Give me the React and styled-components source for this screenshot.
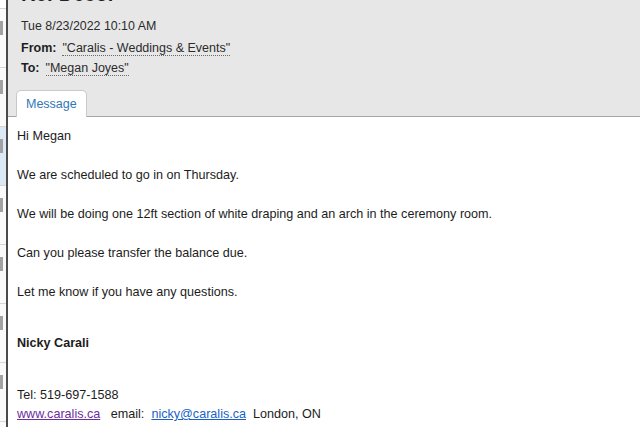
import React from "react";
import styled, { createGlobalStyle } from "styled-components";

const Global = createGlobalStyle`
html, body {
  margin: 0;
  padding: 0;
  background: #fff;
}
body {
  width: 640px;
  height: 427px;
  overflow: hidden;
  font-family: "Liberation Sans", Arial, sans-serif;
}
`;

const Window = styled.div`
display: flex;
flex-direction: row;
width: 640px;
height: 427px;
overflow: hidden;
`;

const Sidebar = styled.div`
width: 6px;
flex-shrink: 0;
display: flex;
flex-direction: column;
padding-top: 8px;
background: #fff;
border-right: 2px solid #4a4a4a;
`;

const ListItem = styled.div`
height: 46px;
flex-shrink: 0;
border-top: 1px solid #d6d6d6;
background: ${(p) => (p.$selected ? "#dbe8f6" : "#fafafa")};
display: flex;
align-items: flex-start;
padding-top: 12px;
box-sizing: content-box;
`;

const ItemMark = styled.div`
width: 3px;
height: 14px;
background: #a2a2a2;
`;

const Main = styled.div`
flex: 1;
display: flex;
flex-direction: column;
`;

const Header = styled.div`
background: #e7e7e7;
border-bottom: 1px solid #a6a6a6;
box-sizing: border-box;
height: 117px;
padding-left: 13px;
display: flex;
flex-direction: column;
`;

const Subject = styled.div`
font-size: 20px;
font-weight: bold;
line-height: 18px;
height: 18px;
margin-top: -15px;
color: #222;
white-space: nowrap;
`;

const DateLine = styled.div`
font-size: 12.4px;
line-height: 16px;
margin-top: 15px;
color: #2b2b2b;
`;

const AddrRow = styled.div`
display: flex;
flex-direction: row;
align-items: baseline;
font-size: 12.5px;
line-height: 16px;
margin-top: ${(p) => p.$gap}px;
color: #2b2b2b;
`;

const AddrLabel = styled.span`
font-weight: bold;
margin-right: 6px;
color: #1e1e1e;
`;

const AddrValue = styled.span`
border-bottom: 1px dotted #6a6a6a;
line-height: 14px;
`;

const Tabs = styled.div`
display: flex;
flex-direction: row;
margin-top: 14px;
margin-left: -5px;
`;

const Tab = styled.div`
height: 26px;
padding: 0 9px;
background: #fff;
border: 1px solid #c9c9c9;
border-bottom: none;
border-radius: 5px 5px 0 0;
font-size: 12.5px;
line-height: 27px;
color: #2f78b8;
margin-bottom: -1px;
position: relative;
`;

const Body = styled.div`
padding: 9px 0 0 9px;
display: flex;
flex-direction: column;
font-size: 12.6px;
color: #1c1c1c;
`;

const Para = styled.div`
line-height: ${(p) => p.$lh || 20}px;
margin-top: ${(p) => p.$gap || 0}px;
font-weight: ${(p) => (p.$bold ? "bold" : "normal")};
white-space: nowrap;
`;

const Link = styled.a`
color: ${(p) => (p.$visited ? "#6b2fa0" : "#1a5fc7")};
text-decoration: underline;
`;

export default function App() {
  const items = [0, 1, 2, 3, 4, 5, 6, 7, 8];
  return (
    <Window>
      <Global />
      <Sidebar>
        {items.map((i) => (
          <ListItem key={i} $selected={i === 2}>
            <ItemMark />
          </ListItem>
        ))}
      </Sidebar>
      <Main>
        <Header>
          <Subject>Re: Decor</Subject>
          <DateLine>Tue 8/23/2022 10:10 AM</DateLine>
          <AddrRow $gap={6}>
            <AddrLabel>From:</AddrLabel>
            <AddrValue>"Caralis - Weddings &amp; Events"</AddrValue>
          </AddrRow>
          <AddrRow $gap={4}>
            <AddrLabel>To:</AddrLabel>
            <AddrValue>"Megan Joyes"</AddrValue>
          </AddrRow>
          <Tabs>
            <Tab>Message</Tab>
          </Tabs>
        </Header>
        <Body>
          <Para>Hi Megan</Para>
          <Para $gap={19}>We are scheduled to go in on Thursday.</Para>
          <Para $gap={19}>
            We will be doing one 12ft section of white draping and an arch in the ceremony room.
          </Para>
          <Para $gap={19}>Can you please transfer the balance due.</Para>
          <Para $gap={19}>Let me know if you have any questions.</Para>
          <Para $gap={31} $bold>Nicky Carali</Para>
          <Para $gap={33} $lh={19}>Tel: 519-697-1588</Para>
          <Para $lh={19}>
            <Link $visited href="#">www.caralis.ca</Link>
            {"\u00a0\u00a0\u00a0email:\u00a0\u00a0"}
            <Link href="#">nicky@caralis.ca</Link>
            {"\u00a0\u00a0London, ON"}
          </Para>
        </Body>
      </Main>
    </Window>
  );
}
